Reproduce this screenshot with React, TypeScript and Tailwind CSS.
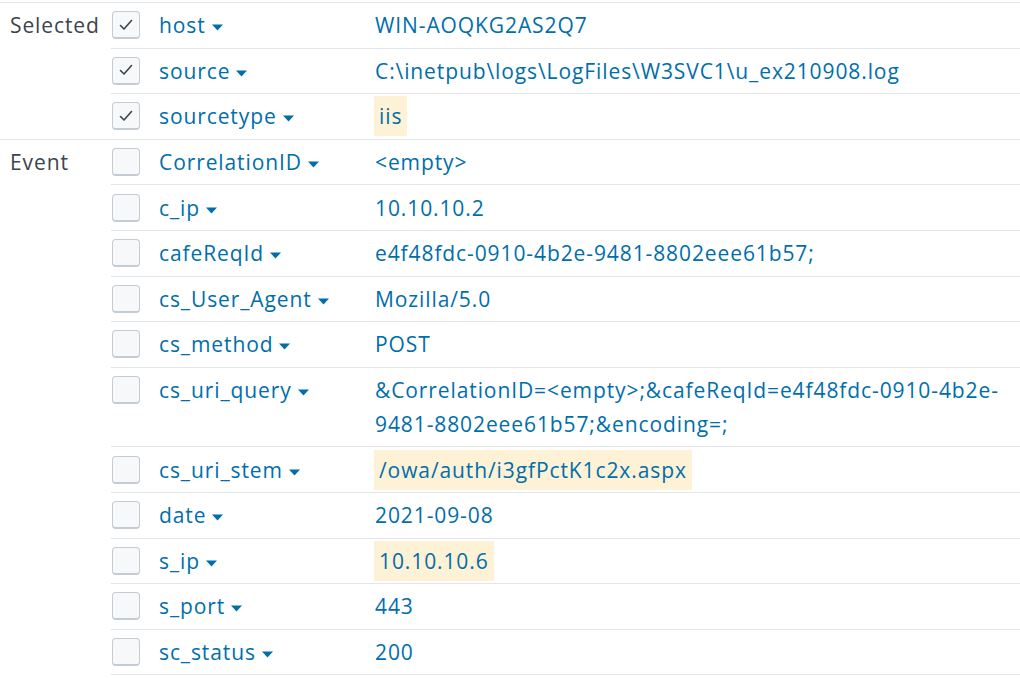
import React from "react";

type Field = {
  name: string;
  value: string;
  checked?: boolean;
  highlight?: boolean;
};

type Group = {
  label: string;
  fields: Field[];
  closed?: boolean;
};

const groups: Group[] = [
  {
    label: "Selected",
    closed: true,
    fields: [
      { name: "host", value: "WIN-AOQKG2AS2Q7", checked: true },
      {
        name: "source",
        value: "C:\\inetpub\\logs\\LogFiles\\W3SVC1\\u_ex210908.log",
        checked: true,
      },
      { name: "sourcetype", value: "iis", checked: true, highlight: true },
    ],
  },
  {
    label: "Event",
    fields: [
      { name: "CorrelationID", value: "<empty>" },
      { name: "c_ip", value: "10.10.10.2" },
      { name: "cafeReqId", value: "e4f48fdc-0910-4b2e-9481-8802eee61b57;" },
      { name: "cs_User_Agent", value: "Mozilla/5.0" },
      { name: "cs_method", value: "POST" },
      {
        name: "cs_uri_query",
        value:
          "&CorrelationID=<empty>;&cafeReqId=e4f48fdc-0910-4b2e-9481-8802eee61b57;&encoding=;",
      },
      { name: "cs_uri_stem", value: "/owa/auth/i3gfPctK1c2x.aspx", highlight: true },
      { name: "date", value: "2021-09-08" },
      { name: "s_ip", value: "10.10.10.6", highlight: true },
      { name: "s_port", value: "443" },
      { name: "sc_status", value: "200" },
    ],
  },
];

const Caret = () => (
  <svg width="11" height="7" viewBox="0 0 11 7" className="ml-[6px] inline-block align-middle">
    <path d="M0 0.5 H11 L5.5 6.5 Z" fill="#006eaa" />
  </svg>
);

const CheckBox = ({ checked }: { checked?: boolean }) => (
  <div className="mt-[3px] flex h-[28px] w-[28px] items-center justify-center rounded-[4px] border border-[#c3cbd4] border-b-2 bg-[#f7f8fa]">
    {checked && (
      <svg width="14" height="12" viewBox="0 0 14 12">
        <path d="M1.5 6.5 L5 10 L12.5 1.5" fill="none" stroke="#3c444d" strokeWidth="1.6" strokeLinecap="round" strokeLinejoin="round" />
      </svg>
    )}
  </div>
);

const FieldRow = ({ field, last }: { field: Field; last: boolean }) => (
  <div className={"flex py-[5.3px] " + (last ? "" : "border-b border-[#e1e6eb]")}>
    <div className="w-[48px] shrink-0 pl-[1px]">
      <CheckBox checked={field.checked} />
    </div>
    <div className="w-[216px] shrink-0 whitespace-nowrap text-[#006eaa]">
      {field.name}
      <Caret />
    </div>
    <div className="min-w-0 flex-1 pr-[6px] text-[#006eaa]">
      {field.highlight ? (
        <span className="-ml-[1px] bg-[#fdf1d6] px-[5px] py-[6px]">{field.value}</span>
      ) : (
        field.value
      )}
    </div>
  </div>
);

export default function App() {
  return (
    <div
      className="mt-[2px] w-[1020px] border-t border-[#e1e6eb] bg-white text-[21px] leading-[34px] tracking-[0.9px]"
      style={{ fontFamily: '"Open Sans", sans-serif' }}
    >
      {groups.map((group) => (
        <div
          key={group.label}
          className={"flex " + (group.closed ? "border-b border-[#e1e6eb]" : "")}
        >
          <div className="w-[111px] shrink-0 pl-[10px] pt-[5.3px] text-[#3c444d]">
            {group.label}
          </div>
          <div className="min-w-0 flex-1">
            {group.fields.map((f, i) => (
              <FieldRow
                key={f.name}
                field={f}
                last={group.closed ? i === group.fields.length - 1 : false}
              />
            ))}
          </div>
        </div>
      ))}
    </div>
  );
}
